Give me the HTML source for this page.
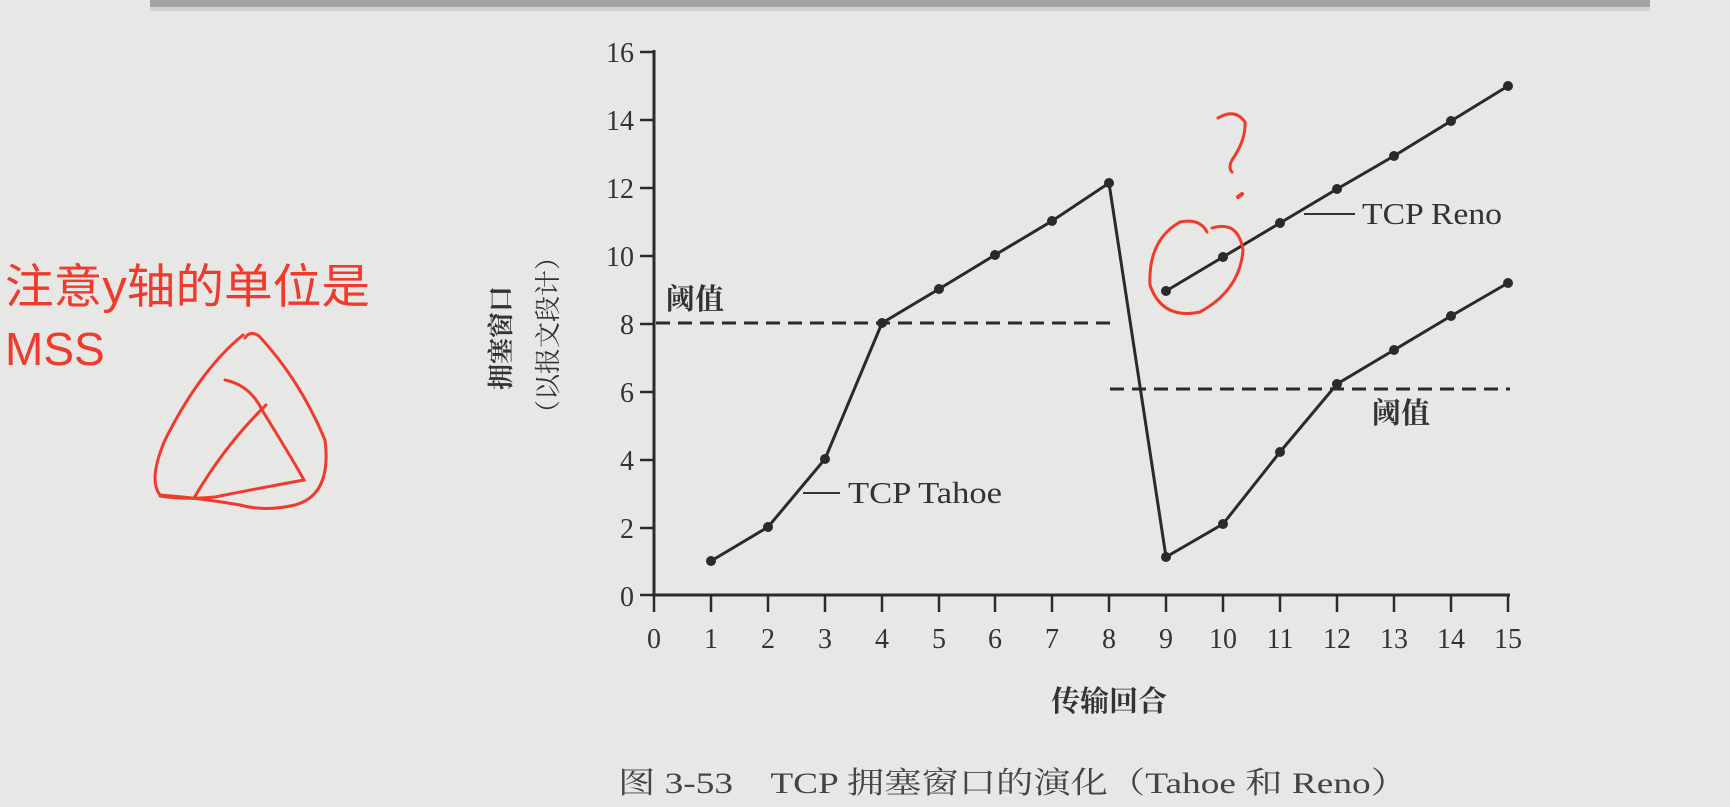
<!DOCTYPE html>
<html><head><meta charset="utf-8"><style>
html,body{margin:0;padding:0;background:#e7e7e5;}
svg{display:block}
</style></head><body>
<svg width="1730" height="807" viewBox="0 0 1730 807" xmlns="http://www.w3.org/2000/svg">
<rect width="1730" height="807" fill="#e7e7e5"/>
<rect x="150" y="0" width="1500" height="7" fill="#6a6a68" opacity="0.55"/>
<rect x="150" y="7" width="1500" height="4" fill="#9a9a98" opacity="0.3"/>
<g fill="#333" font-family="'Liberation Serif','Noto Serif CJK SC',serif">
<line x1="654" y1="50" x2="654" y2="596" stroke="#2a2a2a" stroke-width="3"/>
<line x1="652" y1="595" x2="1510" y2="595" stroke="#2a2a2a" stroke-width="3"/>
<g stroke="#2a2a2a" stroke-width="2.5">
<line x1="640" y1="52" x2="654" y2="52"/><line x1="640" y1="120" x2="654" y2="120"/>
<line x1="640" y1="188" x2="654" y2="188"/><line x1="640" y1="256" x2="654" y2="256"/>
<line x1="640" y1="324" x2="654" y2="324"/><line x1="640" y1="392" x2="654" y2="392"/>
<line x1="640" y1="460" x2="654" y2="460"/><line x1="640" y1="528" x2="654" y2="528"/>
<line x1="640" y1="595" x2="654" y2="595"/>
</g>
<g stroke="#2a2a2a" stroke-width="2.5">
<line x1="654" y1="595" x2="654" y2="612"/><line x1="711" y1="595" x2="711" y2="612"/>
<line x1="768" y1="595" x2="768" y2="612"/><line x1="825" y1="595" x2="825" y2="612"/>
<line x1="882" y1="595" x2="882" y2="612"/><line x1="939" y1="595" x2="939" y2="612"/>
<line x1="995" y1="595" x2="995" y2="612"/><line x1="1052" y1="595" x2="1052" y2="612"/>
<line x1="1109" y1="595" x2="1109" y2="612"/><line x1="1166" y1="595" x2="1166" y2="612"/>
<line x1="1223" y1="595" x2="1223" y2="612"/><line x1="1280" y1="595" x2="1280" y2="612"/>
<line x1="1337" y1="595" x2="1337" y2="612"/><line x1="1394" y1="595" x2="1394" y2="612"/>
<line x1="1451" y1="595" x2="1451" y2="612"/><line x1="1508" y1="595" x2="1508" y2="612"/>
</g>
<g font-size="28" text-anchor="end">
<text x="634" y="62">16</text><text x="634" y="130">14</text><text x="634" y="198">12</text>
<text x="634" y="266">10</text><text x="634" y="334">8</text><text x="634" y="402">6</text>
<text x="634" y="470">4</text><text x="634" y="538">2</text><text x="634" y="606">0</text>
</g>
<g font-size="28" text-anchor="middle">
<text x="654" y="648">0</text><text x="711" y="648">1</text><text x="768" y="648">2</text>
<text x="825" y="648">3</text><text x="882" y="648">4</text><text x="939" y="648">5</text>
<text x="995" y="648">6</text><text x="1052" y="648">7</text><text x="1109" y="648">8</text>
<text x="1166" y="648">9</text><text x="1223" y="648">10</text><text x="1280" y="648">11</text>
<text x="1337" y="648">12</text><text x="1394" y="648">13</text><text x="1451" y="648">14</text>
<text x="1508" y="648">15</text>
</g>
<line x1="656" y1="323" x2="1112" y2="323" stroke="#2a2a2a" stroke-width="3" stroke-dasharray="14,8"/>
<line x1="1110" y1="389" x2="1510" y2="389" stroke="#2a2a2a" stroke-width="3" stroke-dasharray="14,8"/>
<polyline fill="none" stroke="#2a2a2a" stroke-width="3" points="711,561 768,527 825,459 882,323 939,289 995,255 1052,221 1109,183 1166,557 1223,524 1280,452 1337,384 1394,350 1451,316 1508,283"/>
<g fill="#2a2a2a">
<circle cx="711" cy="561" r="5"/><circle cx="768" cy="527" r="5"/><circle cx="825" cy="459" r="5"/>
<circle cx="882" cy="323" r="5"/><circle cx="939" cy="289" r="5"/><circle cx="995" cy="255" r="5"/>
<circle cx="1052" cy="221" r="5"/><circle cx="1109" cy="183" r="5"/><circle cx="1166" cy="557" r="5"/>
<circle cx="1223" cy="524" r="5"/><circle cx="1280" cy="452" r="5"/><circle cx="1337" cy="384" r="5"/>
<circle cx="1394" cy="350" r="5"/><circle cx="1451" cy="316" r="5"/><circle cx="1508" cy="283" r="5"/>
</g>
<polyline fill="none" stroke="#2a2a2a" stroke-width="3" points="1166,291 1223,257 1280,223 1337,189 1394,156 1451,121 1508,86"/>
<g fill="#2a2a2a">
<circle cx="1166" cy="291" r="5"/><circle cx="1223" cy="257" r="5"/><circle cx="1280" cy="223" r="5"/>
<circle cx="1337" cy="189" r="5"/><circle cx="1394" cy="156" r="5"/><circle cx="1451" cy="121" r="5"/>
<circle cx="1508" cy="86" r="5"/>
</g>
<line x1="1304" y1="214" x2="1355" y2="214" stroke="#333" stroke-width="2"/>
<line x1="803" y1="493" x2="840" y2="493" stroke="#333" stroke-width="2"/>
<text x="1362" y="224" font-size="31" textLength="140" lengthAdjust="spacingAndGlyphs">TCP Reno</text>
<text x="848" y="503" font-size="31" textLength="154" lengthAdjust="spacingAndGlyphs">TCP Tahoe</text>
<text x="666" y="309" font-size="29" font-weight="bold">阈值</text>
<text x="1372" y="423" font-size="29" font-weight="bold">阈值</text>
<text x="1109" y="711" font-size="29" font-weight="bold" text-anchor="middle">传输回合</text>
<text x="618" y="793" font-size="30" fill="#444" textLength="790" lengthAdjust="spacingAndGlyphs">图 3-53　TCP 拥塞窗口的演化（Tahoe 和 Reno）</text>
<text transform="translate(510,338) rotate(-90)" font-size="26" font-weight="bold" text-anchor="middle">拥塞窗口</text>
<text transform="translate(557,335) rotate(-90)" font-size="26" text-anchor="middle">（以报文段计）</text>
</g>
<g fill="#f03a2c" font-family="'Liberation Sans','Noto Sans CJK SC',sans-serif">
<text x="5" y="303" font-size="47" textLength="365" lengthAdjust="spacingAndGlyphs">注意y轴的单位是</text>
<text x="5" y="365" font-size="46">MSS</text>
</g>
<g fill="none" stroke="#f03a2c" stroke-width="3" stroke-linecap="round">
<path d="M245,338 Q250,330 259,336 Q300,380 325,440 Q332,495 295,505 Q265,512 240,505 Q200,498 160,495 Q148,480 165,440 Q200,370 243,335"/>
<path d="M225,380 Q250,385 262,410 Q290,455 304,480 Q260,488 215,497 Q185,500 160,496"/>
<path d="M266,405 Q225,445 194,498"/>
<path d="M1207,232 Q1200,218 1180,222 Q1148,240 1150,285 Q1162,320 1200,312 Q1240,290 1243,250 Q1238,220 1212,228"/>
<path d="M1218,118 Q1235,108 1245,122 Q1246,140 1232,160 Q1228,168 1232,172"/>
<path d="M1238,197 L1242,194" stroke-width="4"/>
</g>
</svg>
</body></html>
